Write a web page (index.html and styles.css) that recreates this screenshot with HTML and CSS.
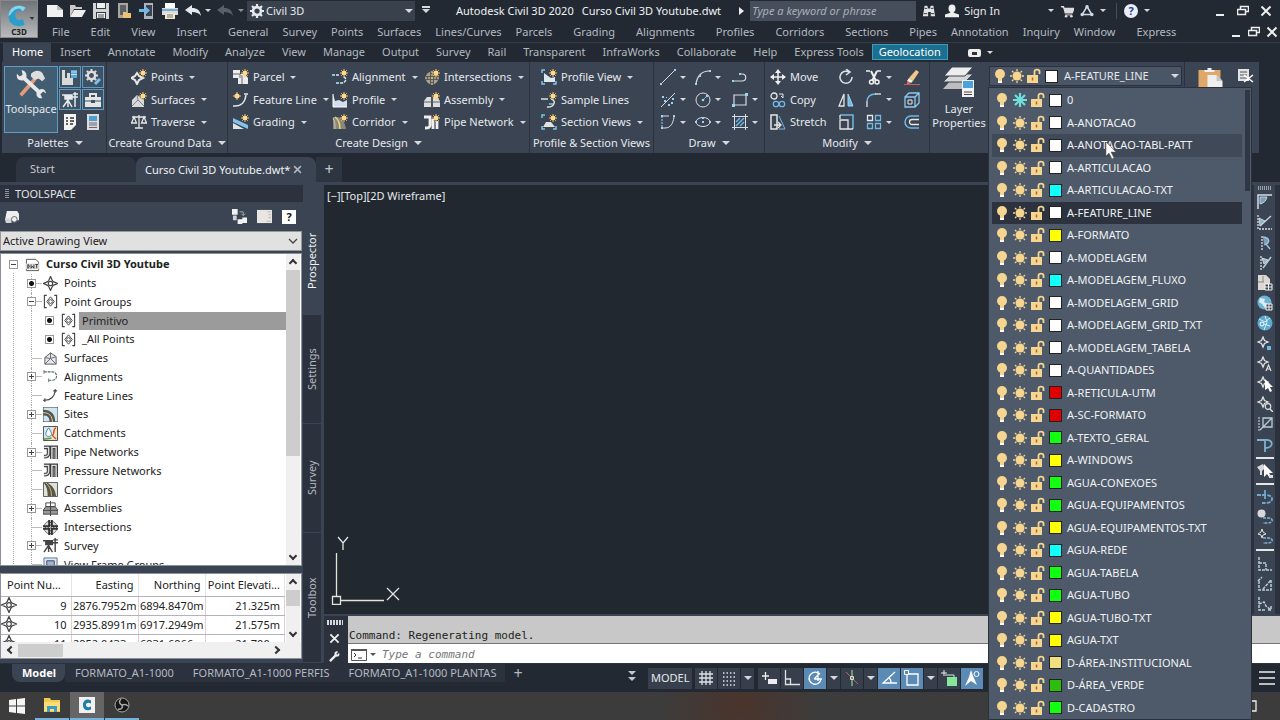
FILE: index.html
```html
<!DOCTYPE html>
<html lang="en">
<head>
    <meta charset="UTF-8">
    <meta name="viewport" content="width=device-width, initial-scale=1.0">
    <title>Autodesk Civil 3D 2020</title>
    <link rel="stylesheet" href="styles.css">
</head>
<body>
    <!-- Icon sprite -->
    <svg class="sprite" aria-hidden="true">
        <symbol id="spark" viewBox="0 0 16 16"><path d="M12 0v8M8 4h8M9.200 1.200l5.600 5.600M14.800 1.200L9.200 6.800" stroke="#f3c56d" stroke-width="1"/><circle cx="12" cy="4" r="2.300" fill="#ffd98a"/></symbol>
        <symbol id="new" viewBox="0 0 16 16"><path d="M0 2h10l6 5v7H0z" fill="#f1f1f1"/><path d="M10 2v5h6" fill="#bbb"/></symbol>
        <symbol id="open" viewBox="0 0 16 16"><path d="M0 14V2h5l1 2h6v2H4z" fill="#c9c9c9"/><path d="M0 14L4 7h12l-4 7z" fill="#eee"/></symbol>
        <symbol id="save" viewBox="0 0 16 16"><path d="M0 0h16v16H0z" fill="#d4d4d4"/><path d="M3 0h10v6H3zM3 9h10v7H3z" fill="#333b46"/><path d="M4 10h8v5H4zM4 0h8v5H4z" fill="#eee"/><path d="M5 12h6M5 14h6" stroke="#555"/></symbol>
        <symbol id="saveas" viewBox="0 0 16 16"><path d="M2 0h10v15H2z" fill="#aaa69b"/><path d="M4 2h6v10H4z" fill="#59606a"/><path d="M7 9h3l1 1h4v5H7z" fill="#f0c173"/></symbol>
        <symbol id="mobile" viewBox="0 0 16 16"><path d="M5 0h9v16H5z" fill="#aeb4ba"/><path d="M7 2h6v11H7z" fill="#3a434f"/><path d="M0 6h6V3l5 4.500L6 12V9H0z" fill="#6fb9e4"/></symbol>
        <symbol id="print" viewBox="0 0 16 16"><path d="M3 0h10v5H3z" fill="#fff"/><path d="M0 5h16v7H0z" fill="#dcdcdc"/><path d="M0 7h16" stroke="#6fb2d8" stroke-width="2"/><path d="M3 10h10v6H3z" fill="#f3e7cf"/><path d="M5 12h6M5 14h6" stroke="#777"/></symbol>
        <symbol id="undo" viewBox="0 0 16 16"><path d="M0 7l7-5v3c5 0 8 2 9 8-2-3-5-4-9-4v3z" fill="currentColor"/></symbol>
        <symbol id="gear" viewBox="0 0 16 16"><circle cx="8" cy="8" r="4.500" fill="none" stroke="currentColor" stroke-width="3"/><path d="M8 0v3M8 13v3M0 8h3M13 8h3M2.300 2.300l2.200 2.200M11.500 11.500l2.200 2.200M13.700 2.300l-2.200 2.200M4.500 11.500l-2.200 2.200" stroke="currentColor" stroke-width="2.500"/></symbol>
        <symbol id="binoculars" viewBox="0 0 16 16"><path d="M3 2h3l1 3h2l1-3h3l2 12h-5V9H7v5H1z" fill="#e4e4e4"/><path d="M3 5h3M10 5h3M2 11h4M10 11h4" stroke="#222933"/></symbol>
        <symbol id="person" viewBox="0 0 16 16"><ellipse cx="8" cy="5" rx="4" ry="4.500" fill="#eee"/><path d="M6 8h4v2l6 2v3H0v-3l6-2z" fill="#eee"/></symbol>
        <symbol id="cart" viewBox="0 0 16 16"><path d="M1 3h3l2 7h8l2-5H5" fill="#ddd" stroke="#ddd" stroke-width="1.500"/><path d="M6 12.500h8" stroke="#ddd"/><circle cx="7" cy="14" r="1.500" fill="#ddd"/><circle cx="13" cy="14" r="1.500" fill="#ddd"/></symbol>
        <symbol id="a360" viewBox="0 0 16 16"><path d="M8 3L2.500 12h11z" fill="none" stroke="#cfd9e6" stroke-width="1.800"/><circle cx="8" cy="3" r="2" fill="#cfd9e6"/><circle cx="2.500" cy="12" r="2" fill="#cfd9e6"/><circle cx="13.500" cy="12" r="2" fill="#cfd9e6"/></symbol>
        <symbol id="min" viewBox="0 0 12 12"><path d="M2 10h8" stroke="#eee" stroke-width="2"/></symbol>
        <symbol id="restore" viewBox="0 0 12 12"><path d="M3.500 4V1.500h8v5H9M.5 4.500h8v5h-8z" fill="none" stroke="#eee" stroke-width="1.500"/></symbol>
        <symbol id="close" viewBox="0 0 12 12"><path d="M1.500 1.500l9 9M10.500 1.500l-9 9" stroke="currentColor" stroke-width="2"/></symbol>

        <symbol id="tools" viewBox="0 0 32 32"><path d="M5 28L20 11" stroke="#e39b78" stroke-width="4"/><path d="M16 5c4-4 9-4 12-1l3 6-3 3-4-3-4 2-4-4z" fill="#dedede"/><path d="M6 1l1 5-3 2-3-3c-1 5 2 8 7 7l14 13c-1 4 2 7 6 6l-2-4 3-3 3 2c0-4-4-6-7-4L11 9c1-4-1-7-5-8z" fill="#e8e8e8"/></symbol>
        <symbol id="p1" viewBox="0 0 16 16"><path d="M0 1h3v12h8v3H0zM5 4h3v8H5z" fill="#d9d9d9"/><path d="M3 9h8v5H3z" fill="#d9d9d9"/><path d="M9 1h6v8H9z" fill="#5aa7d6"/><path d="M9 3h6M9 5.500h6" stroke="#bfe1f6"/></symbol>
        <symbol id="p2" viewBox="0 0 16 16"><g color="#dedede"><use href="#gear" width="13" height="13"/></g><path d="M10 15l5-5" stroke="#7fc0ea" stroke-width="3"/></symbol>
        <symbol id="survey" viewBox="0 0 16 16"><path d="M3 3h7v4H3zM6 7v8M6 8l-5 7M6 8l4 7M0 3h3M10 5h2M13 0v15M11 2h5M11 5h5" fill="currentColor" stroke="currentColor" stroke-width="1.500"/></symbol>
        <symbol id="case" viewBox="0 0 16 16"><path d="M0 5h16v10H0z" fill="#e5e5e5"/><path d="M5 5V2h6v3" fill="none" stroke="#e5e5e5" stroke-width="2"/><path d="M0 9h16" stroke="#3d5568"/><path d="M6 8h4v3H6z" fill="#3d5568"/></symbol>
        <symbol id="p5" viewBox="0 0 16 16"><path d="M2 0h12v11l-5 5H2z" fill="#f3f3f3"/><path d="M4 4h2M8 4h4M4 7h2M8 7h4M4 10h2M8 10h3" stroke="#333" stroke-width="1.500"/></symbol>
        <symbol id="p6" viewBox="0 0 16 16"><path d="M2 0h12v16H2z" fill="#dcdcdc"/><path d="M4 2h8v5H4z" fill="#4e9fd0"/><path d="M4 9h8M4 11h8M4 13.500h8" stroke="#667"/></symbol>

        <symbol id="pt" viewBox="0 0 16 16"><path d="M8 .5l2 4.500 1 1 4.500 2-4.500 2-1 1-2 4.500-2-4.500-1-1L.5 8 5 6l1-1z" fill="none" stroke="currentColor" stroke-width="1.300"/><circle cx="8" cy="8" r="2.300" fill="none" stroke="currentColor" stroke-width="1.200"/></symbol>
        <symbol id="points" viewBox="0 0 16 16"><path d="M6 4l2 3 4 2-4 2-2 4-2-4-4-2 4-2z" fill="none" stroke="#e6e6e6" stroke-width="2"/><use href="#spark"/></symbol>
        <symbol id="surfaces" viewBox="0 0 16 16"><path d="M1 8l5-5 7 5v7H1z" fill="#d8d8d8"/><path d="M1 14l6-6 6 6M7 8L6 3" stroke="#7d858d" fill="none"/><use href="#spark"/></symbol>
        <symbol id="traverse" viewBox="0 0 16 16"><path d="M8 1v13M4 14h8M1 3h14M3 3L.5 9h5zM13 3l-2.500 6h5z" fill="none" stroke="#e6e6e6" stroke-width="1.300"/></symbol>
        <symbol id="parcel" viewBox="0 0 16 16"><path d="M0 1h7v4h5l3 4v6H5V9H0z" fill="#ececec"/><path d="M0 5h7v4M9 6v9" fill="none" stroke="#666" /><use href="#spark"/></symbol>
        <symbol id="feature" viewBox="0 0 16 16"><path d="M2 14c6 0 10-3 11-11M0 14h4M11 2h4" fill="none" stroke="#dfe5ea" stroke-width="1.500"/><path d="M4 0v8M0 4h8" stroke="#f3c56d"/><circle cx="4" cy="4" r="2.500" fill="#ffd98a"/></symbol>
        <symbol id="grading" viewBox="0 0 16 16"><path d="M0 4l15 7v4L0 8z" fill="#7fc4ec"/><path d="M0 9l11 6H0z" fill="#e3e3e3"/><use href="#spark"/></symbol>
        <symbol id="alignment" viewBox="0 0 16 16"><path d="M0 6h7M4 14h5c6 0 6-6 2-6" fill="none" stroke="#cfe3f0" stroke-width="1.500" stroke-dasharray="3 1"/><path d="M1 5h2v2H1zM4 13h2v2H4z" fill="#7fc4ec"/><use href="#spark"/></symbol>
        <symbol id="profile" viewBox="0 0 16 16"><path d="M1 2v13h14V8l-4 2-4-2-4 1z" fill="#cfe0ec"/><path d="M1 2v13h14" fill="none" stroke="#fff"/><use href="#spark"/></symbol>
        <symbol id="corridor" viewBox="0 0 16 16"><path d="M1 3h5c5 2 7 6 8 12H1z" fill="#8b8878"/><path d="M3 3c4 3 5 7 5 12" fill="none" stroke="#e9d37f" stroke-width="1.500"/><path d="M1 4c2 3 2 7 2 11" stroke="#c9c9b9" fill="none"/><use href="#spark"/></symbol>
        <symbol id="intersections" viewBox="0 0 16 16"><circle cx="8" cy="9" r="6.500" fill="#aaa28f"/><path d="M8 2v14M1 9h14" stroke="#5c5a52" stroke-width="4"/><path d="M8 2v14M1 9h14" stroke="#e8dca8" stroke-dasharray="2 1"/><use href="#spark"/></symbol>
        <symbol id="assembly" viewBox="0 0 16 16"><path d="M0 9l3-4h4v10H0zM9 5h4l3 4v6H9z" fill="#dedede"/><path d="M0 10h16M8 2v14" stroke="#59626d"/><use href="#spark"/></symbol>
        <symbol id="pipe" viewBox="0 0 16 16"><path d="M0 3h6v8c0 3-2 3-5 3M9 15V5M13 15V7" fill="none" stroke="#f0f0f0" stroke-width="2.800"/><use href="#spark"/></symbol>
        <symbol id="profileview" viewBox="0 0 16 16"><path d="M1 4V1h3M1 12v3h3M15 12v3h-3" fill="none" stroke="#7fc4ec" stroke-width="1.500"/><path d="M3 4v9h11V8l-4 1-3-2z" fill="#dce8f0"/><use href="#spark"/></symbol>
        <symbol id="sample" viewBox="0 0 16 16"><path d="M0 7h7M6 15c7 1 10-7 4-8" fill="none" stroke="#e0e0e0" stroke-width="1.500"/><path d="M8 12h4" stroke="#7fc4ec" stroke-width="1.500"/><use href="#spark"/></symbol>
        <symbol id="section" viewBox="0 0 16 16"><path d="M1 4V1h3M1 12v3h3M15 12v3h-3" fill="none" stroke="#7fc4ec" stroke-width="1.500"/><path d="M2 13l3-5h5l4 5z" fill="#e2e2e2"/><use href="#spark"/></symbol>

        <symbol id="line" viewBox="0 0 16 16"><path d="M1 15L15 1" stroke="#d6dde4"/><path d="M0 14h2v2H0zM14 0h2v2h-2z" fill="#9fd3f2"/></symbol>
        <symbol id="arc" viewBox="0 0 16 16"><path d="M1 15C2 7 7 2 14 2" fill="none" stroke="#d6dde4" stroke-width="1.200"/><path d="M0 14h2v2H0zM14 1h2v2h-2zM4 6h2v2H4z" fill="#9fd3f2"/></symbol>
        <symbol id="poly" viewBox="0 0 16 16"><path d="M0 12h10c5 0 5-7 0-7H8" fill="none" stroke="#d6dde4" stroke-width="1.200"/><path d="M0 11h2v2H0zM7 4h2v2H7z" fill="#9fd3f2"/></symbol>
        <symbol id="xline" viewBox="0 0 16 16"><path d="M1 15L15 1" stroke="#d6dde4"/><path d="M2 4h2v2H2zM6 5h1v1H6zM11 10h2v2h-2zM8 12h2v2H8zM4 8h2v2H4zM12 6h2v2h-2z" fill="#9fd3f2"/></symbol>
        <symbol id="circle" viewBox="0 0 16 16"><circle cx="8" cy="8" r="7" fill="none" stroke="#d6dde4"/><path d="M8 8l4-4" stroke="#6fb9e4"/><circle cx="8" cy="8" r="1.300" fill="#9fd3f2"/><circle cx="12" cy="4" r="1.300" fill="#9fd3f2"/></symbol>
        <symbol id="rect" viewBox="0 0 16 16"><path d="M2 3h12v10H2z" fill="none" stroke="#d6dde4" stroke-width="1.200"/><path d="M0 12h3v3H0zM13 1h3v3h-3z" fill="#9fd3f2"/></symbol>
        <symbol id="pedit" viewBox="0 0 16 16"><path d="M2 2h7M2 14h3c6 0 8-5 9-11" fill="none" stroke="#d6dde4"/><path d="M2 2v12" stroke="#9fd3f2" stroke-dasharray="2 1"/><path d="M1 1h2v2H1zM1 13h2v2H1zM13 1h2v2h-2z" fill="#9fd3f2"/></symbol>
        <symbol id="ellipse" viewBox="0 0 16 16"><ellipse cx="8" cy="8" rx="7" ry="4.500" fill="none" stroke="#d6dde4"/><path d="M7 7h2v2H7zM0 7h2v2H0zM14 7h2v2h-2zM7 3h2v2H7z" fill="#9fd3f2"/></symbol>
        <symbol id="hatch" viewBox="0 0 16 16"><path d="M0 2.500h16M0 13.500h16M2.500 0v16M13.500 0v16" stroke="#d6dde4"/><path d="M4 8l4-4M4 12l8-8M8 12l4-4" stroke="#6fb9e4" stroke-width="1.500"/></symbol>

        <symbol id="move" viewBox="0 0 16 16"><path d="M8 2v12M2 8h12" stroke="#f0f0f0" stroke-width="1.500"/><path d="M8 0l3 4H5zM8 16l3-4H5zM0 8l4-3v6zM16 8l-4-3v6z" fill="#f0f0f0"/></symbol>
        <symbol id="copy" viewBox="0 0 16 16"><circle cx="4" cy="4" r="3" fill="none" stroke="#e6e6e6" stroke-width="1.300"/><path d="M9 2h4v4l-2-2" fill="none" stroke="#e6e6e6"/><circle cx="6" cy="12" r="2.700" fill="none" stroke="#6fb9e4" stroke-width="1.300"/><circle cx="12" cy="12" r="2.700" fill="none" stroke="#6fb9e4" stroke-width="1.300"/></symbol>
        <symbol id="stretch" viewBox="0 0 16 16"><path d="M1 1h6v14H1z" fill="none" stroke="#e6e6e6" stroke-width="1.500"/><path d="M9 2l6 13H9" fill="none" stroke="#6fb9e4"/><path d="M4 11h6M8 8l3 3-3 3" fill="none" stroke="#e6e6e6" stroke-width="1.300"/></symbol>
        <symbol id="rotate" viewBox="0 0 16 16"><path d="M11 3a6 6 0 1 0 3 5M8 0l4 3-4 3" fill="none" stroke="#dce2e8" stroke-width="1.500"/></symbol>
        <symbol id="mirror" viewBox="0 0 16 16"><path d="M6 2v12H1z" fill="none" stroke="#e6e6e6" stroke-width="1.300"/><path d="M10 2v12h5z" fill="#6fb9e4" stroke="#9fd3f2"/></symbol>
        <symbol id="scale" viewBox="0 0 16 16"><path d="M2 1h13v14" fill="none" stroke="#6fb9e4" stroke-width="1.500"/><path d="M2 6v9h8V6zM2 1v4M10 15h5" fill="none" stroke="#e6e6e6" stroke-width="1.300"/></symbol>
        <symbol id="trim" viewBox="0 0 16 16"><path d="M0 2h4M11 2h4" stroke="#f0f0f0" stroke-width="1.500"/><path d="M5 2l5 10M11 2L6 12" stroke="#f0f0f0" stroke-width="2"/><circle cx="5.500" cy="13" r="2" fill="none" stroke="#f0f0f0" stroke-width="1.500"/><circle cx="11" cy="13" r="2" fill="none" stroke="#f0f0f0" stroke-width="1.500"/></symbol>
        <symbol id="fillet" viewBox="0 0 16 16"><path d="M1 15V9" stroke="#e6e6e6" stroke-width="1.300"/><path d="M1 10C1 4 5 2 10 2" fill="none" stroke="#6fb9e4" stroke-width="1.500"/><path d="M9 2h6" stroke="#e6e6e6" stroke-width="1.300"/></symbol>
        <symbol id="array" viewBox="0 0 16 16"><path d="M1.500 1.500h5v5h-5z" fill="none" stroke="#e6e6e6" stroke-width="1.300"/><path d="M9.500 1.500h5v5h-5zM1.500 9.500h5v5h-5zM9.500 9.500h5v5h-5z" fill="none" stroke="#6fb9e4" stroke-width="1.300"/></symbol>
        <symbol id="erase" viewBox="0 0 16 16"><path d="M5 9l7-8 3 2-6 9z" fill="#f0c98a"/><path d="M5 9l4 3-2 2-4-2z" fill="#f2f2f2"/><path d="M3 12l4 2-2 1H3z" fill="#e0685e"/><path d="M0 15.500h16" stroke="#b9694f"/></symbol>
        <symbol id="box" viewBox="0 0 16 16"><path d="M1 5h10v10H1zM1 5l4-4h10v10l-4 4M11 5l4-4" fill="none" stroke="#8cc9ee" stroke-width="1.300"/><path d="M4 8h4v4H4z" fill="none" stroke="#e6e6e6"/></symbol>
        <symbol id="offset" viewBox="0 0 16 16"><path d="M15 2H7a6 6 0 0 0 0 12h8" fill="none" stroke="#6fb9e4" stroke-width="1.500"/><path d="M15 5.500H8a2.500 2.500 0 0 0 0 5h7" fill="none" stroke="#e6e6e6" stroke-width="1.300"/></symbol>
        <symbol id="layers" viewBox="0 0 32 32"><path d="M8 14h22l-8 9H0z" fill="#bdbdbd"/><path d="M8 8h22l-8 8H0z" fill="#d6d6d6" stroke="#3b4453"/><path d="M9 1h21l-8 9H1z" fill="#ededed" stroke="#3b4453"/><path d="M19 14h12v17H19z" fill="#f2f2f2"/><path d="M20 15h10v7H20z" fill="#4aa3dd"/><path d="M21 26h8M21 28.500h8" stroke="#444"/></symbol>
        <symbol id="paste" viewBox="0 0 24 20"><path d="M0 2h22v18H0z" fill="#dfa86b"/><path d="M6 4V2h3V0h4v2h3v2z" fill="#f2f2f2"/><path d="M9 7h9l6 6v7H9z" fill="#efefef"/><path d="M18 7v6h6" fill="#c7c7c7"/></symbol>
        <symbol id="cut" viewBox="0 0 16 16"><path d="M0 1h11v12H0z" fill="#e3e3e3"/><path d="M2 4h7M2 7h7M2 10h7" stroke="#4b5563"/><path d="M6 7l9 7M15 7l-9 7" stroke="#fff" stroke-width="1.500"/></symbol>

        <symbol id="bulb" viewBox="0 0 16 16"><circle cx="8" cy="6" r="5" fill="#f5d58f"/><path d="M6 10h4v3H6z" fill="#f5d58f"/><path d="M6 13h4v2H6z" fill="#fff"/></symbol>
        <symbol id="sun" viewBox="0 0 16 16"><circle cx="8" cy="8" r="4.500" fill="#f5d58f"/><path d="M8 1v2M8 13v2M1 8h2M13 8h2M3 3l1.500 1.500M11.500 11.500L13 13M13 3l-1.500 1.500M4.500 11.500L3 13" stroke="#f5d58f" stroke-width="1.300"/></symbol>
        <symbol id="frost" viewBox="0 0 16 16"><path d="M8 1v14M1 8h14M3 3l10 10M13 3L3 13" stroke="#6fe0dc" stroke-width="2.200"/></symbol>
        <symbol id="lock" viewBox="0 0 16 16"><path d="M1 7h11v8H1z" fill="#f5d58f"/><path d="M8.500 7V3.500c0-2.500 5-2.500 5 0V6" fill="none" stroke="#f5d58f" stroke-width="1.800"/><path d="M6.500 9.500v3" stroke="#a8672a" stroke-width="1.500"/></symbol>

        <symbol id="dwt" viewBox="0 0 16 16"><path d="M1.500 14.500v-12h10l3 3v9z" fill="#fff" stroke="#555"/><path d="M1 7h14v6H1z" fill="#dadada"/><path d="M3 8v4c2 0 2-4 0-4M6.500 8v4l1.500-2 1.500 2V8M11 8h3M12.500 8v4" fill="none" stroke="#333"/></symbol>
        <symbol id="group" viewBox="0 0 16 16"><path d="M4 1.500H1.500v13H4M12 1.500h2.500v13H12" fill="none" stroke="#444" stroke-width="1.200"/><path d="M8 3l4 5-4 5-4-5z" fill="none" stroke="#444"/><circle cx="8" cy="8" r="2" fill="none" stroke="#444"/></symbol>
        <symbol id="tsurf" viewBox="0 0 16 16"><path d="M2 7l6-5 6 4v8H2z" fill="#e3e8ea" stroke="#555"/><path d="M2 14l6-6 6 6M8 8V2M2 7l6 1 6-2" fill="none" stroke="#667"/></symbol>
        <symbol id="talign" viewBox="0 0 16 16"><path d="M1 3h9c6 0 6 9 0 9H5" fill="none" stroke="#566" stroke-width="1.200" stroke-dasharray="3 1"/><path d="M1 1v4M6 10v4" stroke="#777"/></symbol>
        <symbol id="tfeat" viewBox="0 0 16 16"><path d="M2 13c7 0 10-3 11-10M0 13h4M2 11v4M11 3h4M13 1v4" fill="none" stroke="#444" stroke-width="1.200"/></symbol>
        <symbol id="tsite" viewBox="0 0 16 16"><path d="M0 0h16v16H0z" fill="#cfe6f2" stroke="#333"/><path d="M0 3c9 0 13 5 13 13H7c0-5-2-7-7-7z" fill="#555"/><path d="M0 6c7 0 10 4 10 10" fill="none" stroke="#ead98a"/></symbol>
        <symbol id="tcatch" viewBox="0 0 16 16"><path d="M.5.500h15v15H.5z" fill="#f5e6b3" stroke="#444"/><path d="M1 1h9v12H1z" fill="#cfe9f7"/><path d="M6 2c5 7 3 9 0 9s-5-2 0-9z" fill="#fff" stroke="#3b83b4"/><path d="M14 2c-4 1-1 6-4 8l4 4" fill="none" stroke="#d0473c" stroke-width="1.500"/><path d="M1 14l8-1" stroke="#6da348" stroke-width="2"/></symbol>
        <symbol id="tpipe" viewBox="0 0 16 16"><path d="M1 2.500h5v6c0 3-1 4-5 4M9.500 15V2.500H14V15" fill="none" stroke="#3e3e3e" stroke-width="4"/><path d="M1 2.500h5v6c0 3-1 4-5 4M9.500 15V2.500H14V15" fill="none" stroke="#ddd" stroke-width="1.500"/></symbol>
        <symbol id="tcorr" viewBox="0 0 16 16"><path d="M.5.500h15v15H.5z" fill="#dfe1d8" stroke="#555"/><path d="M1 1h4c6 3 8 8 9 14H5C5 9 4 5 1 1z" fill="#56564e"/><path d="M3 1c5 4 6 9 6 14" fill="none" stroke="#d9c25a"/></symbol>
        <symbol id="tasm" viewBox="0 0 16 16"><path d="M0 10l3-4h10l3 4v4H0z" fill="#999" stroke="#444"/><path d="M3 2h10v4H3zM0 10h16M8 0v16" fill="none" stroke="#444"/></symbol>
        <symbol id="tint" viewBox="0 0 16 16"><circle cx="8" cy="8" r="7" fill="#ddd" stroke="#777"/><path d="M8 0v16M0 8h16" stroke="#333" stroke-width="5"/><path d="M8 0v16M0 8h16" stroke="#ccc" stroke-dasharray="2 1"/></symbol>
        <symbol id="tview" viewBox="0 0 16 16"><path d="M1 1h14v14H1z" fill="#dce8f4" stroke="#5a6f92"/><path d="M4 4h8v8H4z" fill="#9fb4d0" stroke="#445"/></symbol>

        <symbol id="panorama" viewBox="0 0 16 16"><path d="M0 0h6v6H0zM6 11h5v5H6zM11 9h5v6h-5z" fill="#f2f2f2"/><path d="M1 7h4v5H1z" fill="#cdd3d9"/><path d="M8 3h4v4M10 5l2 2 2-2" fill="none" stroke="#9aa5b1"/></symbol>
        <symbol id="preview" viewBox="0 0 16 16"><path d="M0 1h16v14H0z" fill="#e9e6e2"/><path d="M11 3h4M12 6h3M12 9h3M10 13h5" stroke="#bbb"/></symbol>
        <symbol id="pages" viewBox="0 0 16 16"><path d="M3 2h11l2 3v7H1z" fill="#efefef"/><path d="M1 10h7v5H2z" fill="#d5d5d5"/><circle cx="11" cy="11" r="3" fill="#efefef" stroke="#59626d"/></symbol>

        <symbol id="r1" viewBox="0 0 16 16"><path d="M1 15V1h14" fill="none" stroke="#d8dee4" stroke-width="1.500"/><path d="M3 3h7c-1 4-3 6-7 7z" fill="#7d9fb5" stroke="#bcd3e0"/></symbol>
        <symbol id="r2" viewBox="0 0 16 16"><path d="M1 1v14h14" fill="none" stroke="#d8dee4" stroke-width="1.300" stroke-dasharray="2 1"/><path d="M3 12L14 2" stroke="#cbd7df" stroke-width="1.300"/><path d="M2 4l6 3-5 5z" fill="#94b5c8" stroke="#cbd7df"/></symbol>
        <symbol id="r3" viewBox="0 0 16 16"><path d="M5 1v14" stroke="#d8dee4" stroke-width="1.300" stroke-dasharray="2 1"/><path d="M6 2c8 1 7 6 1 8" fill="#7d9fb5" stroke="#9fc6dc" stroke-width="1.300"/><path d="M9 9l4 5" stroke="#9fc6dc" stroke-width="1.300"/></symbol>
        <symbol id="r4" viewBox="0 0 16 16"><path d="M4 1v14" stroke="#d8dee4" stroke-width="1.300" stroke-dasharray="2 1"/><path d="M14 2l-8 11" stroke="#b9cbd6" stroke-width="1.500"/><path d="M5 3l6 2-4 4z" fill="#94b5c8" stroke="#cbd7df"/></symbol>
        <symbol id="rdoc" viewBox="0 0 16 16"><path d="M1 0h8l4 4v11H1z" fill="#ddd9d2"/><path d="M1 7h6M6 1v6" stroke="#8a8a86"/><path d="M8 9h7v6H8zM11.500 9v6M8 12h7" fill="#3b4453" stroke="#f2f2f2"/></symbol>
        <symbol id="rglobe" viewBox="0 0 16 16"><circle cx="7.500" cy="7.500" r="7" fill="#6cb3d4"/><path d="M3 3l5 1-1 3 4 2-3 4-3-4-3-2z" fill="#d8edf5"/><path d="M9 9h6v6H9zM12 9v6M9 12h6" fill="#3b4453" stroke="#f2f2f2"/></symbol>
        <symbol id="rball" viewBox="0 0 16 16"><circle cx="8" cy="8" r="7.500" fill="#5ba9cd"/><circle cx="5" cy="9" r="2" fill="none" stroke="#fff"/><path d="M2 4l6 3 5-4M7 9l6 2M8 1l2 6-3 8" fill="none" stroke="#d8edf5"/></symbol>
        <symbol id="rpt" viewBox="0 0 16 16"><path d="M6 1l1.500 3.500L11 6 7.500 7.500 6 11 4.500 7.500 1 6l3.500-1.500z" fill="none" stroke="#e0e0e0" stroke-width="1.300"/></symbol>
        <symbol id="rpt1" viewBox="0 0 16 16"><use href="#rpt"/><path d="M10 10h4v4h-4z" fill="#6fb9e4"/></symbol>
        <symbol id="rpt2" viewBox="0 0 16 16"><use href="#rpt"/><path d="M9 15l2.500-6 2.500 6M10 13h3" fill="none" stroke="#e0e0e0" stroke-width="1.200"/></symbol>
        <symbol id="rpt3" viewBox="0 0 16 16"><use href="#rpt"/><path d="M8 3v11l3-2 2 4 2-1-2-4h3z" fill="#fff"/></symbol>
        <symbol id="rpt4" viewBox="0 0 16 16"><use href="#rpt"/><circle cx="11" cy="10.500" r="2.800" fill="none" stroke="#e0e0e0" stroke-width="1.200"/><path d="M13 13l3 3" stroke="#e0e0e0" stroke-width="1.500"/></symbol>
        <symbol id="rbox" viewBox="0 0 16 16"><path d="M2 1v14" stroke="#d8dee4" stroke-dasharray="2 1"/><path d="M6 2h9v9H6zM6 11l9-9M3 14l3-3" fill="none" stroke="#b9cbd6" stroke-width="1.300"/></symbol>
        <symbol id="rloop" viewBox="0 0 16 16"><path d="M0 3h8v12M8 3c9-1 9 8 0 8" fill="none" stroke="#7fb2cf" stroke-width="1.800"/></symbol>
        <symbol id="rpick" viewBox="0 0 16 16"><path d="M0 4l6-3 2 4-3 3v4H3V8z" fill="#d8d8d8"/><path d="M7 1v13l3-3 2 3 2-1-2-3h4z" fill="#fff"/><path d="M12 12h4v3h-4z" fill="#ddd"/></symbol>
        <symbol id="rloop2" viewBox="0 0 16 16"><path d="M0 6h9c8 0 8 8 0 8H5M8 1v9" fill="none" stroke="#6fa9cc" stroke-width="1.800" stroke-dasharray="4 1"/></symbol>
        <symbol id="rbox2" viewBox="0 0 16 16"><circle cx="4.500" cy="4.500" r="4" fill="#d8d8d8"/><path d="M6 9h5c6 0 5 5 0 5H6" fill="none" stroke="#7fb2cf" stroke-width="1.500" stroke-dasharray="3 1"/></symbol>
        <symbol id="rbox3" viewBox="0 0 16 16"><path d="M5 0l1 3 3 2-3 1-1 3-1-3-3-1 3-2z" fill="none" stroke="#e0e0e0"/><path d="M6 9h5c6 0 5 5 0 5H6" fill="none" stroke="#7fb2cf" stroke-width="1.500" stroke-dasharray="3 1"/></symbol>
        <symbol id="rang" viewBox="0 0 16 16"><path d="M2 1v13h13M2 7h7v7" fill="none" stroke="#b9cbd6" stroke-width="1.500" stroke-dasharray="3 1"/></symbol>
        <symbol id="rang2" viewBox="0 0 16 16"><path d="M1 5l4-4M2 5v9h12V4L6 13" fill="none" stroke="#b9cbd6" stroke-width="1.500" stroke-dasharray="3 1"/></symbol>
        <symbol id="rang3" viewBox="0 0 16 16"><path d="M2 1v13h6M2 8l5-2 2 4 5 4M14 10v4h-4" fill="none" stroke="#b9cbd6" stroke-width="1.500" stroke-dasharray="3 1"/></symbol>
    </svg>

    <header class="app-header">
        <button class="app-button" aria-label="Application menu">
            <svg viewBox="0 0 38 38"><path d="M26 7c-9-5-18 0-18 9s9 13 17 9l-2-6c-4 2-8 1-8-4s4-6 8-4z" fill="#2b9fcc"/><path d="M26 7c-9-5-18 0-18 9 4-2 4-8 12-8l3 3z" fill="#8bd4ec"/><path d="M30 17h5l-2 3z" fill="#333"/></svg>
            <span>C3D</span>
        </button>
        <div class="title-bar">
            <div class="quick-access">
                <button aria-label="New"><svg><use href="#new"/></svg></button>
                <button aria-label="Open"><svg><use href="#open"/></svg></button>
                <button aria-label="Save"><svg><use href="#save"/></svg></button>
                <button aria-label="Save as"><svg><use href="#saveas"/></svg></button>
                <button aria-label="Open from mobile"><svg><use href="#mobile"/></svg></button>
                <button aria-label="Plot"><svg><use href="#print"/></svg></button>
                <button aria-label="Undo"><svg><use href="#undo"/></svg></button>
            </div>
            <i class="caret"></i>
            <button class="redo" aria-label="Redo"><svg><use href="#undo"/></svg></button>
            <i class="caret dim"></i>
            <div class="workspace">
                <svg><use href="#gear"/></svg>
                <select aria-label="Workspace"><option>Civil 3D</option></select>
                <i class="caret big"></i>
            </div>
            <i class="caret more"></i>
            <div class="app-title"><span>Autodesk Civil 3D 2020</span><span>Curso Civil 3D Youtube.dwt</span></div>
            <div class="info-center">
                <i class="caret right"></i>
                <input type="text" placeholder="Type a keyword or phrase" aria-label="Search help">
                <button aria-label="Search"><svg><use href="#binoculars"/></svg></button>
                <button class="sign-in"><svg><use href="#person"/></svg>Sign In</button>
                <i class="caret"></i>
                <button aria-label="App store"><svg><use href="#cart"/></svg></button>
                <button aria-label="Autodesk account"><svg><use href="#a360"/></svg></button>
                <i class="caret"></i>
                <span class="divider"></span>
                <button class="help" aria-label="Help">?</button>
                <i class="caret"></i>
            </div>
            <div class="window-buttons">
                <button aria-label="Minimize"><svg><use href="#min"/></svg></button>
                <button aria-label="Restore"><svg><use href="#restore"/></svg></button>
                <button aria-label="Close"><svg><use href="#close"/></svg></button>
            </div>
        </div>
        <div class="menu-bar">
            <nav>
                <a href="#">File</a><a href="#">Edit</a><a href="#">View</a><a href="#">Insert</a>
                <a href="#" class="tight">General</a><a href="#" class="tight">Survey</a><a href="#" class="tight">Points</a><a href="#" class="tight">Surfaces</a><a href="#" class="tight">Lines/Curves</a>
                <a href="#">Parcels</a><a href="#">Grading</a><a href="#">Alignments</a><a href="#">Profiles</a><a href="#">Corridors</a><a href="#">Sections</a>
                <a href="#" class="tight">Pipes</a><a href="#" class="tight">Annotation</a><a href="#" class="tight">Inquiry</a><a href="#">Window</a><a href="#">Express</a>
            </nav>
            <div class="window-buttons small">
                <button aria-label="Minimize drawing"><svg><use href="#min"/></svg></button>
                <button aria-label="Restore drawing"><svg><use href="#restore"/></svg></button>
                <button aria-label="Close drawing"><svg><use href="#close"/></svg></button>
            </div>
        </div>
    </header>

    <nav class="ribbon-tabs">
        <a href="#" class="active">Home</a><a href="#">Insert</a><a href="#">Annotate</a><a href="#">Modify</a><a href="#">Analyze</a><a href="#">View</a><a href="#">Manage</a><a href="#">Output</a><a href="#">Survey</a><a href="#">Rail</a><a href="#">Transparent</a><a href="#">InfraWorks</a><a href="#">Collaborate</a><a href="#">Help</a><a href="#">Express Tools</a>
        <a href="#" class="context">Geolocation</a>
        <button class="ribbon-state" aria-label="Minimize ribbon"><span></span><i class="caret"></i></button>
    </nav>

    <div class="ribbon">
        <section class="panel palettes">
            <div class="panel-body">
                <button class="toolspace-button"><svg><use href="#tools"/></svg>Toolspace</button>
                <button class="on" aria-label="Panorama"><svg><use href="#p1"/></svg></button>
                <button class="on" aria-label="Settings"><svg><use href="#p2"/></svg></button>
                <button class="on" aria-label="Survey"><svg><use href="#survey"/></svg></button>
                <button class="on" aria-label="Toolbox"><svg><use href="#case"/></svg></button>
                <button aria-label="Properties"><svg><use href="#p5"/></svg></button>
                <button aria-label="Calculator"><svg><use href="#p6"/></svg></button>
            </div>
            <h2>Palettes <i class="caret big"></i></h2>
        </section>
        <section class="panel ground">
            <div class="panel-body">
                <button><svg><use href="#points"/></svg>Points<i class="caret"></i></button>
                <button><svg><use href="#surfaces"/></svg>Surfaces<i class="caret"></i></button>
                <button><svg><use href="#traverse"/></svg>Traverse<i class="caret"></i></button>
            </div>
            <h2>Create Ground Data <i class="caret big"></i></h2>
        </section>
        <section class="panel design">
            <div class="panel-body">
                <button><svg><use href="#parcel"/></svg>Parcel<i class="caret"></i></button>
                <button><svg><use href="#feature"/></svg>Feature Line<i class="caret"></i></button>
                <button><svg><use href="#grading"/></svg>Grading<i class="caret"></i></button>
                <button><svg><use href="#alignment"/></svg>Alignment<i class="caret"></i></button>
                <button><svg><use href="#profile"/></svg>Profile<i class="caret"></i></button>
                <button><svg><use href="#corridor"/></svg>Corridor<i class="caret"></i></button>
                <button><svg><use href="#intersections"/></svg>Intersections<i class="caret"></i></button>
                <button><svg><use href="#assembly"/></svg>Assembly<i class="caret"></i></button>
                <button><svg><use href="#pipe"/></svg>Pipe Network<i class="caret"></i></button>
            </div>
            <h2>Create Design <i class="caret big"></i></h2>
        </section>
        <section class="panel views">
            <div class="panel-body">
                <button><svg><use href="#profileview"/></svg>Profile View<i class="caret"></i></button>
                <button><svg><use href="#sample"/></svg>Sample Lines</button>
                <button><svg><use href="#section"/></svg>Section Views<i class="caret"></i></button>
            </div>
            <h2>Profile &amp; Section Views</h2>
        </section>
        <section class="panel draw">
            <div class="panel-body">
                <button aria-label="Line"><svg><use href="#line"/></svg><i class="caret"></i></button>
                <button aria-label="Construction line"><svg><use href="#xline"/></svg><i class="caret"></i></button>
                <button aria-label="Polyline"><svg><use href="#pedit"/></svg><i class="caret"></i></button>
                <button aria-label="Arc"><svg><use href="#arc"/></svg><i class="caret"></i></button>
                <button aria-label="Circle"><svg><use href="#circle"/></svg><i class="caret"></i></button>
                <button aria-label="Ellipse"><svg><use href="#ellipse"/></svg><i class="caret"></i></button>
                <button aria-label="Curve"><svg><use href="#poly"/></svg></button>
                <button aria-label="Rectangle"><svg><use href="#rect"/></svg><i class="caret"></i></button>
                <button aria-label="Hatch"><svg><use href="#hatch"/></svg><i class="caret"></i></button>
            </div>
            <h2>Draw <i class="caret big"></i></h2>
        </section>
        <section class="panel modify">
            <div class="panel-body">
                <button><svg><use href="#move"/></svg>Move</button>
                <button><svg><use href="#copy"/></svg>Copy</button>
                <button><svg><use href="#stretch"/></svg>Stretch</button>
                <button aria-label="Rotate"><svg><use href="#rotate"/></svg></button>
                <button aria-label="Mirror"><svg><use href="#mirror"/></svg></button>
                <button aria-label="Scale"><svg><use href="#scale"/></svg></button>
                <button aria-label="Trim"><svg><use href="#trim"/></svg><i class="caret"></i></button>
                <button aria-label="Fillet"><svg><use href="#fillet"/></svg><i class="caret"></i></button>
                <button aria-label="Array"><svg><use href="#array"/></svg><i class="caret"></i></button>
                <button aria-label="Erase"><svg><use href="#erase"/></svg></button>
                <button aria-label="Explode"><svg><use href="#box"/></svg></button>
                <button aria-label="Offset"><svg><use href="#offset"/></svg></button>
            </div>
            <h2>Modify <i class="caret big"></i></h2>
        </section>
        <section class="panel layer-panel">
            <button class="layer-properties"><svg><use href="#layers"/></svg>Layer<br>Properties</button>
            <div class="layer-combo">
                <svg><use href="#bulb"/></svg><svg><use href="#sun"/></svg><svg><use href="#lock"/></svg><span class="swatch"></span>
                <select aria-label="Layer"><option>A-FEATURE_LINE</option></select>
                <i class="caret big"></i>
            </div>
        </section>
        <section class="panel clipboard">
            <button class="paste" aria-label="Paste"><svg><use href="#paste"/></svg></button>
            <button aria-label="Cut"><svg><use href="#cut"/></svg></button>
        </section>
    </div>

    <nav class="file-tabs">
        <a href="#">Start</a>
        <a href="#" class="active">Curso Civil 3D Youtube.dwt*<svg><use href="#close"/></svg></a>
        <button aria-label="New tab">+</button>
    </nav>

    <main>
        <aside class="toolspace">
            <h2>TOOLSPACE</h2>
            <div class="toolspace-tools">
                <button aria-label="Item view"><svg><use href="#pages"/></svg></button>
                <button class="push" aria-label="Panorama"><svg><use href="#panorama"/></svg></button>
                <button aria-label="Preview"><svg><use href="#preview"/></svg></button>
                <button class="question" aria-label="Help">?</button>
            </div>
            <div class="view-select">
                <select aria-label="View"><option>Active Drawing View</option></select>
                <svg viewBox="0 0 12 12"><path d="M2 4l4 4 4-4" fill="none" stroke="#444" stroke-width="1.300"/></svg>
            </div>
            <div class="tree-box">
                <ul id="tree"></ul>
                <div class="scroll-v"><b class="up"></b><span class="thumb"></span><b class="down"></b></div>
            </div>
            <div class="points-box">
                <div class="points-view">
                    <table>
                        <thead><tr><th>Point Nu...</th><th>Easting</th><th>Northing</th><th>Point Elevati...</th></tr></thead>
                        <tbody>
                            <tr><td><svg><use href="#pt"/></svg>9</td><td>2876.7952m</td><td>6894.8470m</td><td>21.325m</td></tr>
                            <tr><td><svg><use href="#pt"/></svg>10</td><td>2935.8991m</td><td>6917.2949m</td><td>21.575m</td></tr>
                            <tr><td><svg><use href="#pt"/></svg>11</td><td>2952.0433m</td><td>6931.6966m</td><td>21.700m</td></tr>
                        </tbody>
                    </table>
                </div>
                <div class="scroll-v"><b class="up"></b><span class="thumb"></span><b class="down"></b></div>
                <div class="scroll-h"><b class="left"></b><span class="thumb"></span><b class="right"></b></div>
            </div>
        </aside>
        <nav class="side-tabs">
            <a href="#" class="active">Prospector</a><a href="#">Settings</a><a href="#">Survey</a><a href="#">Toolbox</a>
        </nav>
        <div class="workarea">
            <div class="drawing-row">
                <div class="drawing">
                    <span>[−][Top][2D Wireframe]</span>
                    <svg class="ucs" viewBox="0 0 74 72"><path d="M9.500 64V20M13 67.500h44" fill="none" stroke="#e4e4d4" stroke-width="1.300"/><path d="M5.500 63.500h8v8h-8z" fill="none" stroke="#e4e4d4" stroke-width="1.300"/><path d="M11 4l5 6 5-6M16 10v7M60 55l12 12M72 55L60 67" fill="none" stroke="#e4e4e4" stroke-width="1.300"/></svg>
                </div>
                <div class="right-tools" id="right-tools"></div>
            </div>
            <div class="command">
                <div class="command-grip"><i></i><button aria-label="Close command line"><svg><use href="#close"/></svg></button><button aria-label="Customize"><svg viewBox="0 0 12 12"><path d="M1 11l6-6" stroke="#eee" stroke-width="2.500"/><path d="M6 2c2-2 3-2 4-1L8 3l1 1 2-2c1 2 0 4-1 4s-3 1-4-1z" fill="#eee"/></svg></button></div>
                <div class="command-lines">
                    <p>Command: Regenerating model.</p>
                    <label><svg viewBox="0 0 16 12"><path d="M.5.500h15v11H.5z" fill="#fff" stroke="#555"/><path d="M0 1h16" stroke="#555" stroke-width="2"/><path d="M3 4l2 2-2 2M7 9h4" fill="none" stroke="#333"/></svg><i class="caret"></i><input type="text" placeholder="Type a command" aria-label="Command"></label>
                </div>
            </div>
        </div>
    </main>

    <footer class="status-bar">
        <nav class="layout-tabs">
            <a href="#" class="active">Model</a><a href="#">FORMATO_A1-1000</a><a href="#">FORMATO_A1-1000 PERFIS</a><a href="#">FORMATO_A1-1000 PLANTAS</a>
            <button aria-label="New layout">+</button>
        </nav>
        <div class="status-tools">
            <svg class="chevrons" viewBox="0 0 10 12"><path d="M1 1l4 4 4-4zM1 7l4 4 4-4z" fill="#c3c8ce"/></svg>
            <button class="model">MODEL</button>
            <button aria-label="Grid"><svg viewBox="0 0 16 16"><path d="M4 1v14M8 1v14M12 1v14M1 4h14M1 8h14M1 12h14" stroke="#dfe3e7" stroke-width="1.300"/></svg></button>
            <button aria-label="Snap"><svg viewBox="0 0 16 16"><path d="M2 3h13M2 7h13M2 11h13M2 15h13" stroke="#dfe3e7" stroke-width="1.500" stroke-dasharray="1.500 2"/></svg></button>
            <button class="narrow" aria-label="Snap options"><i class="caret big"></i></button>
            <button class="gap" aria-label="Dynamic input"><svg viewBox="0 0 16 16"><path d="M1 6h7M4.500 2v8" stroke="#eee" stroke-width="1.300"/><path d="M7 9h9v5H7z" fill="#eee"/></svg></button>
            <button aria-label="Ortho"><svg viewBox="0 0 16 16"><path d="M1.500 0v14.500H16M1.500 9h5v5" fill="none" stroke="#dfe3e7" stroke-width="1.300"/></svg></button>
            <button class="on" aria-label="Polar tracking"><svg viewBox="0 0 16 16"><path d="M11 3a6 6 0 1 0 3 6M7 9h8M7 9l6-6M11 1v10" fill="none" stroke="#fff" stroke-width="1.300"/></svg></button>
            <button class="narrow" aria-label="Polar options"><i class="caret big"></i></button>
            <button aria-label="Isometric drafting"><svg viewBox="0 0 16 16"><path d="M8 0v16" stroke="#7dcc7b" stroke-width="1.300"/><path d="M2 2l12 12" stroke="#b4666b"/><path d="M6.500 6.500h3v3h-3z" fill="none" stroke="#ddd"/></svg></button>
            <button class="narrow" aria-label="Isometric options"><i class="caret big"></i></button>
            <button class="on" aria-label="Object snap tracking"><svg viewBox="0 0 16 16"><path d="M14 2L2 13h14M8 8c2 1 2 3 2 5" fill="none" stroke="#fff" stroke-width="1.300"/></svg></button>
            <button class="on" aria-label="Object snap"><svg viewBox="0 0 16 16"><path d="M3 4h11v11H3z" fill="none" stroke="#fff" stroke-width="1.300"/><path d="M.5.500h4v4h-4z" fill="#5b8ab5" stroke="#fff"/></svg></button>
            <button class="narrow" aria-label="Snap list"><i class="caret big"></i></button>
            <button aria-label="Selection cycling"><svg viewBox="0 0 16 16"><path d="M0 3h6M3 0v6" stroke="#eee"/><path d="M4 5h9v9" fill="none" stroke="#d5eed7"/><path d="M6 7h10v9H6z" fill="#86e79a"/></svg></button>
            <button class="on" aria-label="Annotation visibility"><svg viewBox="0 0 16 16"><path d="M7 0l2 6 4 9-6-4-6 5 4-9z" fill="#fff"/><circle cx="12.500" cy="4" r="2.500" fill="none" stroke="#fff"/></svg></button>
        </div>
        <button class="customize" aria-label="Customization"><svg viewBox="0 0 16 16"><path d="M0 2h16M0 8h16M0 14h16" stroke="#eee" stroke-width="1.500"/></svg></button>
    </footer>

    <div class="taskbar">
        <button aria-label="Start"><svg viewBox="0 0 16 16"><path d="M0 2l7-1v6.500H0zM8 1l8-1v7.500H8zM0 8.500h7V15l-7-1zM8 8.500h8V16l-8-1z" fill="#f5f5f5"/></svg></button>
        <button class="running" aria-label="File Explorer"><svg viewBox="0 0 16 16"><path d="M0 1h6l1 2h9v12H0z" fill="#f3c94f"/><path d="M0 5h16v9H0z" fill="#fbdd76"/><path d="M3 15V9h10v6h-3v-3H6v3z" fill="#3d9bc8"/></svg></button>
        <button class="running current" aria-label="Civil 3D"><svg viewBox="0 0 16 16"><path d="M0 0h16v16H0z" fill="#f0f0f0"/><path d="M12 3.500C8 1 4 3.500 4 8s4 6.500 8 4.500V9.500C9 11 7 10 7 8s2-3 5-1.500z" fill="#1e7fa6"/></svg></button>
        <button class="running" aria-label="OBS Studio"><svg viewBox="0 0 16 16"><circle cx="8" cy="8" r="7" fill="#161616" stroke="#aaa"/><path d="M7 2c-3 3-1 5 1 6M14 9c-3-3-5-1-6-1M4 12c4 1 5-2 4-4" fill="none" stroke="#aaa" stroke-width="1.500"/></svg></button>
        <button class="notify" aria-label="Notifications"><svg viewBox="0 0 16 16"><path d="M1 3h14v10H1z" fill="none" stroke="#eee" stroke-width="1.300"/></svg></button>
    </div>

    <div class="layer-list">
        <ul id="layers-list" role="listbox" aria-label="Layers"></ul>
        <span class="layer-thumb"></span>
        <svg class="cursor" viewBox="0 0 12 18"><path d="M1 1v14l3-3 3 6 2-1-3-6h5z" fill="#fff" stroke="#555" stroke-width=".5"/></svg>
    </div>

    <script>
        const layers = [
            ["0", "white"], ["A-ANOTACAO", "white"], ["A-ANOTACAO-TABL-PATT", "white"], ["A-ARTICULACAO", "white"],
            ["A-ARTICULACAO-TXT", "cyan"], ["A-FEATURE_LINE", "white"], ["A-FORMATO", "yellow"], ["A-MODELAGEM", "white"],
            ["A-MODELAGEM_FLUXO", "cyan"], ["A-MODELAGEM_GRID", "white"], ["A-MODELAGEM_GRID_TXT", "white"],
            ["A-MODELAGEM_TABELA", "white"], ["A-QUANTIDADES", "white"], ["A-RETICULA-UTM", "red"], ["A-SC-FORMATO", "red"],
            ["A-TEXTO_GERAL", "green"], ["A-WINDOWS", "yellow"], ["AGUA-CONEXOES", "green"], ["AGUA-EQUIPAMENTOS", "green"],
            ["AGUA-EQUIPAMENTOS-TXT", "yellow"], ["AGUA-REDE", "cyan"], ["AGUA-TABELA", "green"], ["AGUA-TUBO", "green"],
            ["AGUA-TUBO-TXT", "yellow"], ["AGUA-TXT", "yellow"], ["D-ÁREA-INSTITUCIONAL", "sand"], ["D-ÁREA_VERDE", "leaf"],
            ["D-CADASTRO", "green"]
        ];

        // level, icon, label, expander
        const treeItems = [
            [0, "dwt", "Curso Civil 3D Youtube", "minus"], [1, "pt", "Points", "dot"], [1, "group", "Point Groups", "minus"],
            [2, "group", "Primitivo", "dot"], [2, "group", "_All Points", "dot"], [1, "tsurf", "Surfaces", ""],
            [1, "talign", "Alignments", "plus"], [1, "tfeat", "Feature Lines", ""], [1, "tsite", "Sites", "plus"],
            [1, "tcatch", "Catchments", ""], [1, "tpipe", "Pipe Networks", "plus"], [1, "tpipe", "Pressure Networks", ""],
            [1, "tcorr", "Corridors", ""], [1, "tasm", "Assemblies", "plus"], [1, "tint", "Intersections", ""],
            [1, "survey", "Survey", "plus"], [1, "tview", "View Frame Groups", ""]
        ];

        const rightIcons = ["r1", "r2", "r3", "r4", "rdoc", "rglobe", "rball", "rpt1", "rpt2", "rpt3", "rpt4", "rbox", "rloop", "-", "rpick", "-", "rloop2", "rbox2", "rbox3", "-", "rang", "rang2", "rang3"];

        function icon(name) {
            return `<svg><use href="#${name}"/></svg>`;
        }

        document.getElementById('layers-list').innerHTML = layers.map(([name, color], i) => {
            let state = i === 2 ? 'hover' : i === 5 ? 'selected' : '';
            return `<li role="option" class="${state}">${icon('bulb')}${icon(i === 0 ? 'frost' : 'sun')}${icon('lock')}<span class="swatch ${color}"></span>${name}</li>`;
        }).join('');

        document.getElementById('tree').innerHTML = treeItems.map(([level, name, label, expander]) =>
            `<li class="level-${level} ${label === 'Primitivo' ? 'selected' : ''}"><i class="expander ${expander}"></i>${icon(name)}<span>${label}</span></li>`
        ).join('');

        document.getElementById('right-tools').innerHTML = '<i class="grip"></i>' + rightIcons.map(name =>
            name === '-' ? '<hr>' : `<button aria-label="Tool">${icon(name)}</button>`
        ).join('');
    </script>
</body>
</html>
```
FILE: styles.css
```css
* {
    box-sizing: border-box;
}

body {
    font-family: "Noto Sans", "Open Sans", sans-serif;
    font-size: 11px;
    line-height: 16px;
    background-color: #222933;
    color: #e6e9ed;
    margin: 0;
    height: 100vh;
    display: flex;
    flex-direction: column;
    overflow: hidden;
    position: relative;
}

button, input, select {
    font: inherit;
    color: inherit;
    background: none;
    border: none;
    padding: 0;
    margin: 0;
}

select {
    appearance: none;
}

a {
    color: inherit;
    text-decoration: none;
    white-space: nowrap;
}

h2 {
    font-size: 11px;
    font-weight: normal;
    margin: 0;
}

ul {
    list-style: none;
    margin: 0;
    padding: 0;
}

svg {
    width: 16px;
    height: 16px;
    flex: none;
    display: block;
}

.sprite {
    position: absolute;
    width: 0;
    height: 0;
}

button {
    display: flex;
    align-items: center;
    white-space: nowrap;
}

.caret {
    flex: none;
    border: 3px solid transparent;
    border-top: 3px solid #d5d9de;
    border-bottom: none;
}

.caret.big {
    border-width: 4px;
    border-bottom: none;
}

.caret.dim {
    opacity: 0.6;
}

.caret.right {
    border: 4px solid transparent;
    border-left: 5px solid #eee;
    border-right: none;
}

.caret.more {
    border-width: 4px;
    border-bottom: none;
    position: relative;
}

.caret.more::before {
    content: "";
    position: absolute;
    left: -4px;
    top: -7px;
    width: 8px;
    height: 2px;
    background: #d5d9de;
}

/* Header */
.app-header {
    flex: none;
    display: grid;
    grid-template-columns: 38px 1fr;
    grid-template-rows: 21px 21px;
    border-bottom: 1px solid #343c48;
}

.app-button {
    grid-row: 1 / 3;
    height: 38px;
    flex-direction: column;
    justify-content: flex-end;
    background: linear-gradient(#6f7378, #b9bbbd);
    border: 1px solid #888;
    position: relative;
    color: #222;
    font-size: 8px;
    font-weight: bold;
    line-height: 10px;
}

.app-button svg {
    position: absolute;
    inset: 0;
    width: 36px;
    height: 36px;
}

.title-bar {
    display: flex;
    align-items: center;
    padding-left: 9px;
}

.quick-access {
    display: flex;
    gap: 7px;
    padding-right: 4px;
}

.redo {
    color: #596069;
    padding: 0 5px 0 6px;
}

.workspace {
    display: flex;
    align-items: center;
    width: 168px;
    height: 20px;
    padding: 0 2px 0 3px;
    margin: 0 7px 0 3px;
    background: #39414d;
}

.workspace select {
    flex: 1;
    padding-left: 2px;
}

.workspace svg {
    width: 14px;
    height: 14px;
}

.app-title {
    flex: 1;
    display: flex;
    gap: 8px;
    padding-left: 26px;
    color: #f0f2f4;
    white-space: nowrap;
}

.info-center {
    display: flex;
    align-items: center;
    gap: 6px;
}

.info-center input {
    width: 166px;
    height: 20px;
    padding: 0 2px;
    background: #464e5c;
    font-style: italic;
}

.info-center input::placeholder {
    color: #a9b0b9;
}

.info-center svg {
    width: 14px;
    height: 14px;
}

.sign-in {
    gap: 5px;
    padding: 0 42px 0 3px;
}

.divider {
    width: 1px;
    height: 16px;
    background: #454d59;
    margin: 0 1px 0 4px;
}

.help {
    width: 14px;
    height: 14px;
    border-radius: 50%;
    background: #e9eef7;
    color: #22418f;
    font-weight: bold;
    justify-content: center;
}

.window-buttons {
    display: flex;
    gap: 11px;
    padding: 0 8px 0 64px;
    color: #eee;
}

.window-buttons svg {
    width: 12px;
    height: 12px;
}

.window-buttons.small {
    gap: 6px;
    padding: 0 2px 0 0;
}

.menu-bar {
    display: flex;
    justify-content: space-between;
    align-items: center;
    padding-left: 14px;
    color: #b4b9c0;
}

.menu-bar nav {
    display: flex;
}

.menu-bar a {
    padding-right: 21px;
}

.menu-bar a.tight {
    padding-right: 14px;
}

/* Ribbon */
.ribbon-tabs {
    flex: none;
    height: 19px;
    display: flex;
    padding-left: 3px;
    line-height: 18px;
    color: #b4b9c0;
}

.ribbon-tabs a {
    padding: 0 8px 0 9px;
}

.ribbon-tabs .active {
    background: #3b4453;
    color: #fff;
}

.ribbon-tabs .context {
    background: #1b6f90;
    border: 1px solid #3f9bbc;
    color: #fff;
    line-height: 14px;
    height: 16px;
    padding: 0 6px;
    margin: 1px 0;
}

.ribbon-state {
    padding-left: 20px;
    gap: 6px;
}

.ribbon-state span {
    width: 13px;
    height: 8px;
    border-radius: 2px;
    border: 2px solid #eee;
    border-width: 3px 4px 2px;
    background: #333;
}

.ribbon {
    flex: none;
    display: flex;
    height: 91px;
    margin: 0 21px 0 2px;
    background: #3b4453;
}

.panel {
    display: flex;
    flex-direction: column;
    border-right: 1px solid #2b323d;
    padding-top: 4px;
    flex: none;
}

.panel-body {
    height: 68px;
    display: grid;
    grid-template-rows: repeat(3, 1fr);
    grid-auto-flow: column;
}

.panel-body button {
    gap: 4px;
}

.panel-body .caret {
    margin-left: 2px;
}

.panel h2 {
    display: flex;
    justify-content: center;
    align-items: center;
    gap: 6px;
    height: 20px;
    white-space: nowrap;
}

.palettes {
    width: 105px;
    padding-left: 2px;
}

.palettes .panel-body {
    grid-template-columns: 54px 22px 22px;
    grid-auto-flow: row;
    column-gap: 1px;
    row-gap: 1px;
}

.palettes button {
    justify-content: center;
}

.palettes .on, .palettes .toolspace-button {
    background: #3f5264;
    border: 1px solid #5f9cc4;
}

.palettes .toolspace-button {
    grid-row: 1 / 4;
    flex-direction: column;
    justify-content: flex-start;
    background: #425c72;
    padding-top: 2px;
    gap: 2px;
}

.toolspace-button svg {
    width: 30px;
    height: 30px;
}

.ground {
    width: 121px;
}

.ground .panel-body {
    padding-left: 24px;
}

.design {
    width: 302px;
}

.design .panel-body {
    padding-left: 5px;
    grid-template-columns: 99px 92px 1fr;
}

.views {
    width: 124px;
}

.views .panel-body {
    padding-left: 11px;
}

.draw {
    width: 111px;
}

.draw .panel-body {
    padding-left: 6px;
    grid-template-columns: 35px 37px 1fr;
}

.draw .caret, .modify .caret {
    margin-left: 0;
}

.modify {
    width: 165px;
}

.modify .panel-body {
    padding-left: 5px;
    grid-template-columns: 68px 28px 38px 1fr;
}

.layer-panel {
    width: 255px;
    flex-direction: row;
    gap: 4px;
    padding-left: 3px;
}

.layer-properties {
    flex-direction: column;
    width: 52px;
    line-height: 14px;
    white-space: normal;
}

.layer-properties svg {
    width: 32px;
    height: 32px;
    margin-bottom: 4px;
}

.layer-combo {
    display: flex;
    align-items: center;
    flex: 1;
    height: 20px;
    margin: 0 2px 0 0;
    padding: 0 2px;
    gap: 1px;
    background: #4a5565;
    border: 1px solid #2b323d;
}

.layer-combo select {
    flex: 1;
    padding-left: 2px;
}

.clipboard {
    flex: 1;
    flex-direction: row;
    align-items: flex-start;
    gap: 15px;
    padding: 6px 0 0 13px;
    border: none;
}

.paste svg {
    width: 25px;
    height: 20px;
}

/* File tabs */
.file-tabs {
    flex: none;
    display: flex;
    height: 28px;
    margin-top: 4px;
    padding-left: 16px;
    line-height: 23px;
    border-bottom: 3px solid #3b4453;
    color: #c3c8ce;
}

.file-tabs a {
    width: 120px;
    padding-left: 14px;
    background: #2d3541;
    border-radius: 8px 8px 0 0;
}

.file-tabs .active {
    display: flex;
    align-items: center;
    gap: 3px;
    width: 180px;
    padding-left: 9px;
    background: #3b4453;
    color: #f0f2f4;
}

.file-tabs svg {
    width: 9px;
    height: 9px;
    color: #b4b9c0;
}

.file-tabs button {
    width: 26px;
    justify-content: center;
    background: #2d3541;
    font-size: 16px;
}

/* Main area */
main {
    flex: 1;
    min-height: 0;
    display: flex;
    background: #3b4453;
}

.toolspace {
    width: 303px;
    flex: none;
    display: flex;
    flex-direction: column;
    color: #222;
    padding-bottom: 4px;
}

.toolspace h2 {
    display: flex;
    align-items: center;
    gap: 6px;
    color: #e0e3e7;
    background: #2b323e;
    height: 17px;
    line-height: 17px;
    padding-left: 5px;
}

.toolspace h2::before {
    content: "";
    width: 4px;
    height: 10px;
    background: repeating-linear-gradient(#8b939d 0 1px, transparent 1px 2px);
}

.toolspace-tools {
    display: flex;
    align-items: center;
    gap: 10px;
    height: 29px;
    padding: 0 7px 0 4px;
}

.toolspace-tools svg {
    width: 15px;
    height: 15px;
}

.push {
    margin-left: auto;
}

.question {
    width: 14px;
    height: 14px;
    justify-content: center;
    background: #fff;
    color: #111;
    font-weight: bold;
}

.view-select {
    flex: none;
    display: flex;
    align-items: center;
    height: 20px;
    padding: 0 2px;
    margin: 0 1px 2px 0;
    border: 1px solid #999;
    background: #e1e1e1;
}

.view-select select {
    flex: 1;
}

.view-select svg {
    width: 12px;
    height: 12px;
}

.tree-box, .points-box {
    background: #fff;
    margin-right: 1px;
    border: 1px solid #8b919a;
}

.tree-box {
    flex: 1;
    min-height: 0;
    display: flex;
    overflow: hidden;
    margin-bottom: 7px;
    padding-right: 1px;
}

#tree {
    flex: 1;
    height: 319px;
    margin-top: 1px;
    display: grid;
    grid-template-rows: repeat(17, 1fr);
    background: repeating-linear-gradient(#aaa 0 1px, #fff 1px 2px) 12px 18px / 1px 100% no-repeat;
}

#tree li {
    display: flex;
    align-items: center;
    position: relative;
    padding-left: 8px;
}

#tree .level-0 span {
    font-weight: bold;
}

#tree .level-1 {
    padding-left: 26px;
}

#tree .level-2 {
    padding-left: 44px;
}

#tree .level-1::before, #tree .level-2::before {
    content: "";
    position: absolute;
    left: 30px;
    top: 0;
    bottom: 0;
    width: 10px;
    border-left: 1px dotted #aaa;
}

#tree .level-1::before {
    background: linear-gradient(#bbb, #bbb) 0 50% / 100% 1px no-repeat;
}

#tree svg {
    margin-right: 3px;
    width: 15px;
    height: 15px;
    color: #444;
}

#tree span {
    flex: 1;
    padding: 0 3px;
    line-height: 18px;
}

#tree .selected span {
    background: #9b9b9b;
}

.expander {
    width: 9px;
    height: 9px;
    margin-right: 7px;
    flex: none;
    position: relative;
}

.expander.plus, .expander.minus, .expander.dot {
    border: 1px solid #999;
    background: linear-gradient(#445, #445) center / 5px 1px no-repeat, #fff;
}

.expander.plus {
    background: linear-gradient(#445, #445) center / 5px 1px no-repeat, linear-gradient(#445, #445) center / 1px 5px no-repeat, #fff;
}

.expander.dot {
    background: radial-gradient(#111 2px, #fff 3px);
}

.scroll-v {
    width: 14px;
    flex: none;
    display: flex;
    flex-direction: column;
    align-items: center;
    background: #f0f0f0;
    padding: 6px 0;
}

.scroll-v .thumb {
    width: 100%;
    height: 186px;
    background: #cdcdcd;
    margin-top: 4px;
}

.scroll-v b, .scroll-h b {
    width: 6px;
    height: 6px;
    border: solid #333;
    border-width: 2px 0 0 2px;
    transform: rotate(45deg);
}

.scroll-v .down {
    margin-top: auto;
    transform: rotate(225deg);
}

.scroll-h .left {
    transform: rotate(-45deg);
}

.scroll-h .right {
    margin-left: auto;
    transform: rotate(135deg);
}

.points-box {
    flex: none;
    display: grid;
    grid-template-columns: 1fr 15px;
    grid-template-rows: 68px 16px;
}

.points-view {
    overflow: hidden;
}

.points-box .scroll-v .thumb {
    height: 16px;
}

.scroll-h {
    grid-column: 1 / 3;
    display: flex;
    align-items: center;
    background: #f0f0f0;
    padding: 0 22px 0 7px;
}

.scroll-h .thumb {
    width: 45px;
    height: 13px;
    margin-left: 4px;
    background: #cdcdcd;
}

table {
    width: 284px;
    table-layout: fixed;
    border-collapse: collapse;
}

th, td {
    height: 19px;
    padding: 0 4px 0 0;
    text-align: right;
    font-weight: normal;
    border: 1px solid #e3cfd2;
    border-width: 0 1px 1px 0;
    border-bottom-color: #b3b3c0;
    white-space: nowrap;
    line-height: 17px;
}

td:nth-child(2), td:nth-child(3) {
    padding-right: 1px;
}

th {
    height: 22px;
    border-right-color: #e5e5e5;
}

th:nth-child(1) {
    width: 70px;
    text-align: left;
    padding-left: 6px;
}

th:nth-child(2), th:nth-child(3) {
    width: 67px;
}

td svg {
    float: left;
    color: #444;
}

/* Vertical palette tabs */
.side-tabs {
    width: 21px;
    flex: none;
    display: grid;
    grid-template-rows: 130px 109px 109px 1fr;
    background: #2b323e;
    border-right: 3px solid #3b4453;
    color: #b4b9c0;
}

.side-tabs a {
    writing-mode: vertical-rl;
    transform: rotate(180deg);
    text-align: center;
    line-height: 18px;
    border-top: 1px solid #3b4453;
    padding-bottom: 22px;
}

.side-tabs a:nth-child(n + 2) {
    padding-bottom: 0;
}

.side-tabs .active {
    background: #3b4453;
    color: #f0f2f4;
}

.workarea {
    flex: 1;
    min-width: 0;
    display: flex;
    flex-direction: column;
}

.drawing-row {
    flex: 1;
    min-height: 0;
    display: flex;
}

.drawing {
    flex: 1;
    display: flex;
    flex-direction: column;
    justify-content: space-between;
    align-items: flex-start;
    padding: 3px 3px 9px;
    background: #212830;
}

.ucs {
    width: 74px;
    height: 72px;
}

.right-tools {
    width: 28px;
    display: flex;
    flex-direction: column;
    align-items: center;
    overflow: hidden;
    background: #3b4453;
    border: 1px solid #2b323d;
    border-width: 0 5px 0 2px;
}

.right-tools .grip {
    width: 14px;
    height: 4px;
    margin: 1px 0 2px;
    background: repeating-linear-gradient(90deg, #9aa1aa 0 1px, transparent 1px 2px);
}

.right-tools button {
    height: 20px;
    flex: 1;
}

.right-tools hr {
    width: 18px;
    height: 2px;
    border: none;
    margin: 2px 0;
    background: #e6e6e6;
}

/* Command line */
.command {
    flex: none;
    height: 49px;
    display: flex;
    border-top: 2px solid #3b4453;
    color: #222;
    font-family: "DejaVu Sans Mono", monospace;
}

.command-grip {
    width: 24px;
    display: flex;
    flex-direction: column;
    justify-content: space-between;
    align-items: center;
    background: #2b323e;
    padding: 4px 3px 1px 0;
    color: #eee;
}

.command-grip i {
    width: 16px;
    height: 5px;
    background: repeating-linear-gradient(90deg, #d5d9de 0 2px, transparent 2px 3px);
}

.command-grip svg {
    width: 11px;
    height: 11px;
}

.command-lines {
    flex: 1;
    background: #fff;
}

.command-lines p {
    margin: 0;
    height: 28px;
    padding: 12px 1px 0;
    background: #c8c8c8;
    border-bottom: 1px solid #777;
}

.command-lines label {
    display: flex;
    align-items: center;
    gap: 3px;
    height: 19px;
    padding: 2px 0 0 3px;
}

.command-lines label svg {
    height: 12px;
}

.command-lines .caret {
    border-top-color: #555;
}

.command-lines input {
    flex: 1;
    font-style: italic;
    padding-left: 3px;
}

.command-lines input::placeholder {
    color: #777;
}

/* Status bar */
.status-bar {
    flex: none;
    height: 29px;
    display: flex;
    border-top: 1px solid #2b323e;
    background: #222933;
}

.layout-tabs {
    flex: 0 0 49%;
    display: flex;
    align-items: flex-start;
    padding-left: 12px;
    line-height: 18px;
    color: #b4b9c0;
}

.layout-tabs a {
    padding: 0 9px 0 10px;
    background: #2b323e;
}

.layout-tabs .active {
    background: #3b4453;
    color: #fff;
    font-weight: bold;
    border-radius: 0 0 8px 8px;
}

.layout-tabs button {
    padding: 0 8px;
    font-size: 16px;
}

.status-tools {
    display: flex;
    align-items: center;
}

.status-tools .chevrons {
    width: 10px;
    height: 12px;
    margin: 0 11px 4px 0;
}

.status-tools button {
    width: 22px;
    height: 21px;
    justify-content: center;
    background: #363f4b;
    margin-right: 1px;
}

.status-tools .model {
    width: 44px;
    margin-right: 3px;
}

.status-tools .narrow {
    width: 13px;
}

.status-tools .gap {
    margin-left: 3px;
}

.status-tools .on {
    background: #5b8ab5;
}

.customize {
    margin-left: auto;
    padding-right: 5px;
}

/* Taskbar */
.taskbar {
    flex: none;
    height: 28px;
    display: flex;
    gap: 1px;
    background: #3c3c3c radial-gradient(80px 60px at 740px 14px, #4b342c, transparent);
}

.taskbar button {
    width: 34px;
    justify-content: center;
}

.taskbar .running {
    border-bottom: 2px solid #76b3dc;
}

.taskbar .current {
    background: #656565;
}

.taskbar .notify {
    margin-left: auto;
    margin-right: 14px;
}

/* Open layer drop-down */
.layer-list {
    position: absolute;
    top: 87px;
    bottom: 0;
    right: 28px;
    width: 264px;
    padding: 1px 9px 0 3px;
    background: #4e5a6a;
    border: 1px solid #2b323d;
}

.layer-list ul {
    height: 100%;
    display: grid;
    grid-auto-rows: 1fr;
}

.layer-list li {
    display: flex;
    align-items: center;
    gap: 2px;
    padding-left: 2px;
    color: #f0f2f4;
}

.layer-list li.hover {
    background: #404957;
}

.layer-list li.selected {
    background: #2c333f;
}

.swatch {
    width: 13px;
    height: 13px;
    flex: none;
    margin: 0 3px 0 2px;
    background: #fff;
    border: 1px solid #222;
}

.layer-list li .swatch {
    margin-left: 1px;
}

.cyan { background: #1ff; }
.yellow { background: #ff0; }
.red { background: #e00000; }
.green { background: #1f1; }
.sand { background: #f2df80; }
.leaf { background: #2dbd0c; }

.layer-thumb {
    position: absolute;
    right: 1px;
    top: 2px;
    width: 5px;
    height: 101px;
    background: #2f3744;
}

.cursor {
    position: absolute;
    left: 116px;
    top: 53px;
    width: 12px;
    height: 18px;
}
```
